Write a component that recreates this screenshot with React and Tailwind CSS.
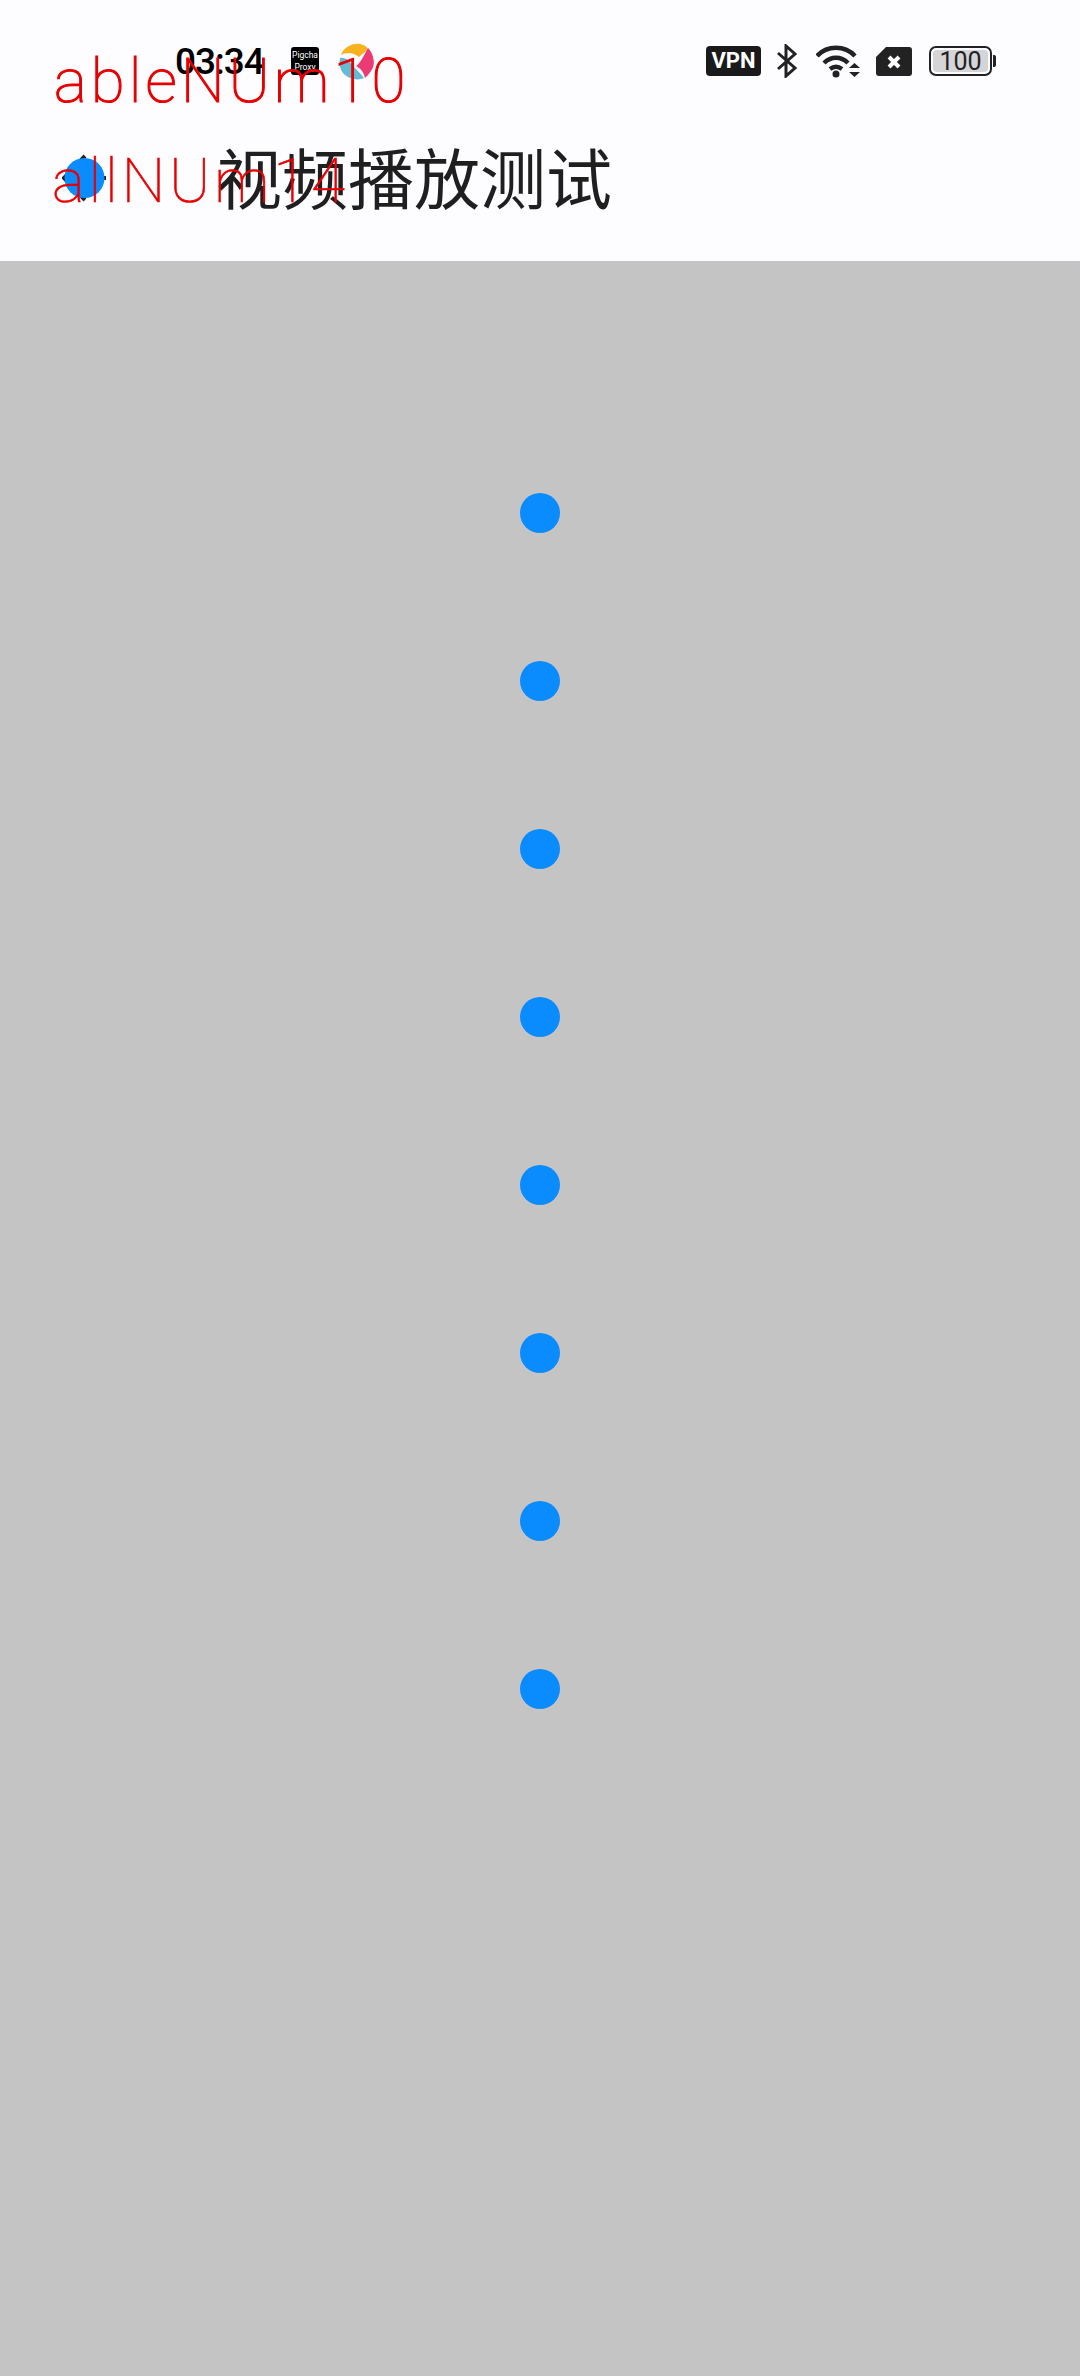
export default function App() {
  const dots = [0, 1, 2, 3, 4, 5, 6, 7];
  return (
    <div className="relative w-[1080px] h-[2376px] overflow-hidden bg-[#c4c4c4] font-['Roboto',sans-serif]">
      <header className="h-[261px] bg-[#fdfcff] flex flex-col">
        <div className="h-[122px] flex items-center pl-[175px] pr-[84px]">
          <span className="text-[37px] font-medium leading-none tracking-[-1px] text-black w-[116px]">03:34</span>
          <div className="w-[28px] h-[28px] bg-black rounded-[3px] flex flex-col items-center justify-center text-white text-[8.5px] leading-[12px]">
            <span>Pigcha</span>
            <span>Proxy</span>
          </div>
          <svg className="ml-[19px]" width="37" height="37" viewBox="0 0 37 37">
            <path d="M3 12 C6 4 14 0 22 1 C27 2 29 4 30 6 C26 10 23 12 21 14 C15 9 8 9 3 12Z" fill="#f9b21d" />
            <path d="M30 5 C36 11 38 22 33 28 C31 31 29 33 27 35 C26 29 22 25 18 23 C22 21 26 12 30 5Z" fill="#ec3b74" />
            <path d="M2 15 C8 14 12 19 15 23 C19 27 23 31 26 35 C20 38 10 36 5 30 C2 26 1 20 2 15Z" fill="#63bcd3" />
          </svg>
          <div className="ml-auto flex items-center">
            <div className="w-[55px] h-[30px] rounded-[4px] bg-[#1a1a1a] text-white text-[22px] font-bold leading-none flex items-center justify-center">VPN</div>
            <svg className="ml-[15px]" width="22" height="34" viewBox="0 0 22 34" fill="none" stroke="#222" strokeWidth="3">
              <path d="M2 9 L19 24 L10 32 L10 2 L19 10 L2 25" />
            </svg>
            <svg className="ml-[18px]" width="44" height="34" viewBox="0 0 44 34" fill="none" stroke="#222" strokeWidth="4.5">
              <path d="M1 12 C11 1 29 1 39 12" />
              <path d="M8 19 C15 12 25 12 32 19" />
              <path d="M14 25 C18 22 22 22 26 25" />
              <circle cx="20" cy="30" r="3.5" fill="#222" stroke="none" />
              <path d="M33 24 L38.5 19 L44 24Z" fill="#222" stroke="none" />
              <path d="M33 28 L44 28 L38.5 33Z" fill="#222" stroke="none" />
            </svg>
            <svg className="ml-[16px]" width="36" height="29" viewBox="0 0 36 29">
              <path d="M10 0 H33 Q36 0 36 3 V26 Q36 29 33 29 H3 Q0 29 0 26 V10 Z" fill="#222" />
              <path d="M13 10 L23 20 M23 10 L13 20" stroke="#fff" strokeWidth="4" />
            </svg>
            <div className="ml-[17px] flex items-center">
              <div className="w-[63px] h-[30px] rounded-[7px] border-2 border-[#222] p-[2px]">
                <div className="h-full rounded-[4px] bg-[#d5d5d8] text-[#222] text-[25px] leading-none flex items-center justify-center">100</div>
              </div>
              <div className="w-[3px] h-[12px] ml-[1px] rounded-r-[2px] bg-[#222]"></div>
            </div>
          </div>
        </div>
        <div className="h-[139px] pb-[34px] flex items-center">
          <svg className="ml-[62px] mt-[6px]" width="46" height="48" viewBox="0 0 46 48">
            <path d="M23 2 L2 24 L23 46 M2 24 H44" fill="none" stroke="#222" strokeWidth="4" />
            <circle cx="22.5" cy="24" r="20" fill="#0a8cff" />
          </svg>
          <h1 className="ml-[108px] text-[66px] leading-none font-normal text-[#1f1f1f] font-['Noto_Sans_CJK_SC',sans-serif]">视频播放测试</h1>
        </div>
      </header>
      <main className="flex flex-col items-center pt-[232px] gap-[128px]">
        {dots.map((d) => (
          <div key={d} className="w-[40px] h-[40px] rounded-full bg-[#0a8cff]"></div>
        ))}
      </main>
      <div className="absolute left-[54px] top-[50px] text-[62px] leading-none text-[#e60000] font-thin [-webkit-text-stroke:1.2px_#e60000] tracking-[4px] whitespace-nowrap">ableNUm10</div>
      <div className="absolute left-[52px] top-[150px] text-[62px] leading-none text-[#e60000] font-thin [-webkit-text-stroke:0.6px_#e60000] tracking-[3.7px] whitespace-nowrap">allNUm14</div>
    </div>
  );
}
